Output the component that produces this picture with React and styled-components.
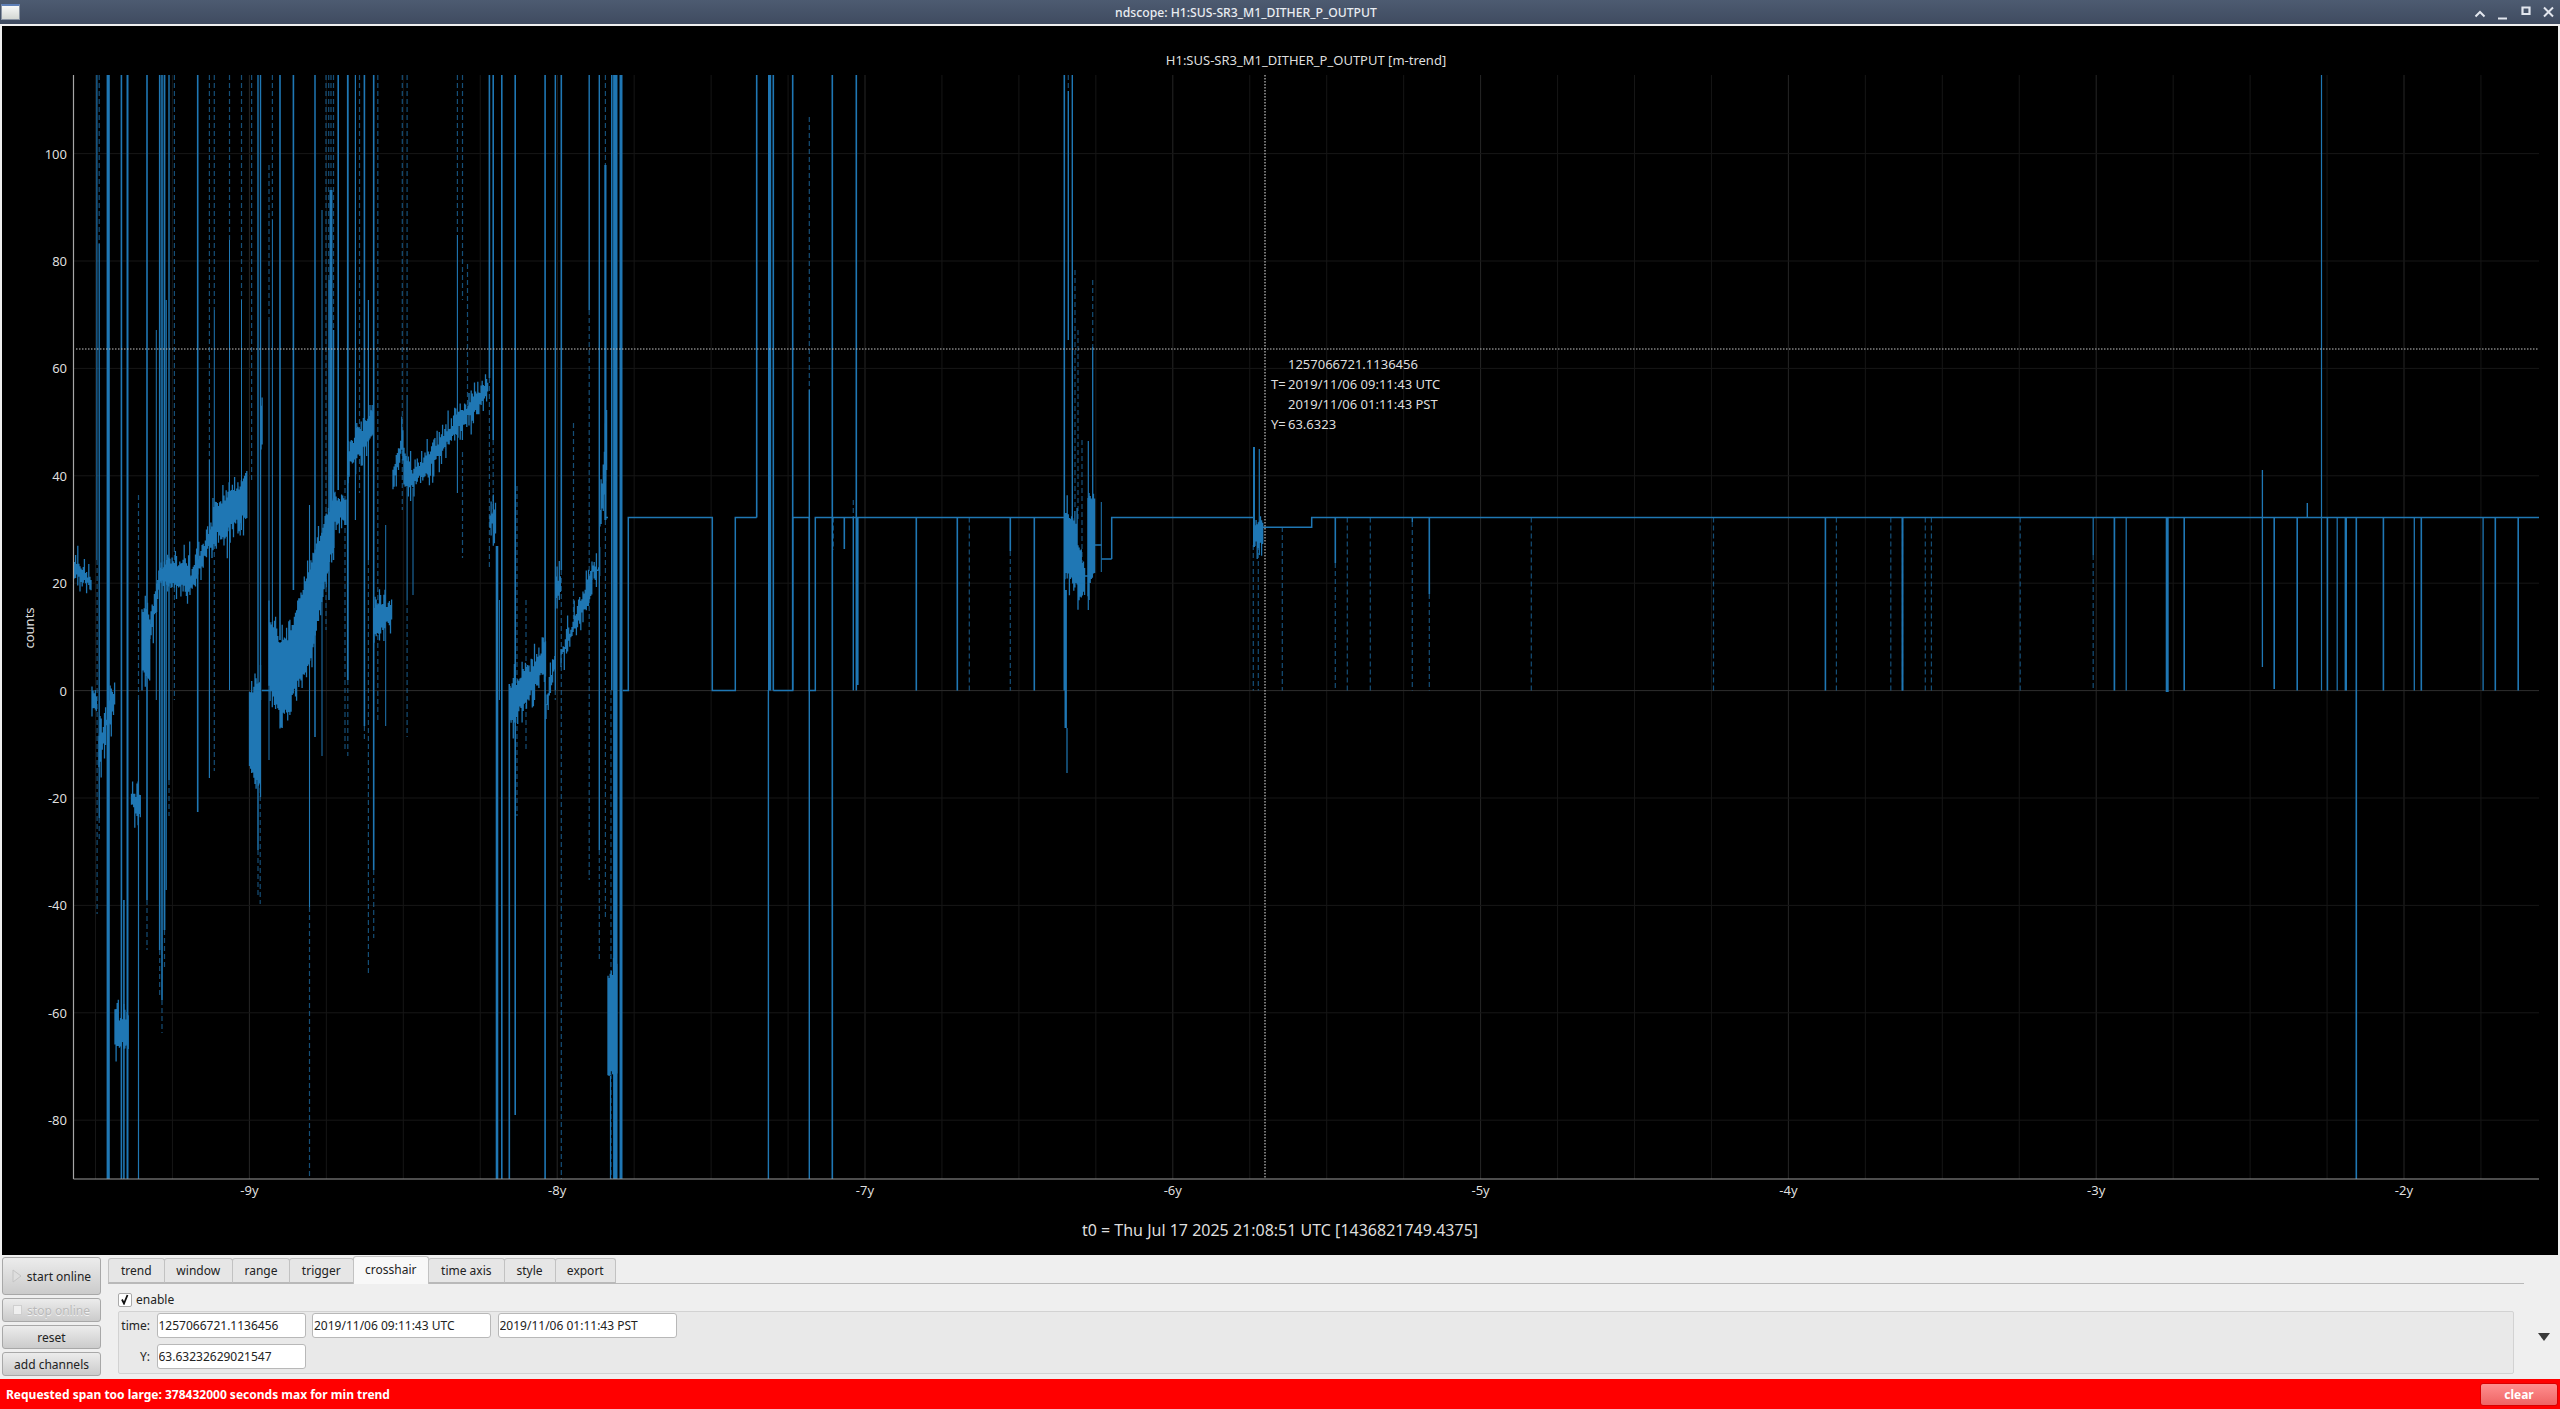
import React from "react";
import styled, { createGlobalStyle } from "styled-components";

const GlobalStyle = createGlobalStyle`
  html, body {
    margin: 0;
    padding: 0;
    height: 100%;
    overflow: hidden;
    background: #efefef;
    font-family: "Noto Sans", sans-serif;
    font-size: 12px;
    color: #222;
  }
  #root { height: 100%; }
`;

const Window = styled.div`
  height: 1409px;
  display: flex;
  flex-direction: column;
`;

const TitleBar = styled.div`
  height: 24px;
  flex: none;
  display: flex;
  align-items: center;
  padding: 0 3px 0 1px;
  background: linear-gradient(#4d5b71, #3f4b60);
  color: #e9edf2;
  font-size: 12.2px;
  font-weight: 500;
`;

const WindowIcon = styled.div`
  width: 19px;
  height: 16px;
  border: 1px solid #8a94a3;
  border-top: 2px solid #5f80b8;
  box-sizing: border-box;
  background: linear-gradient(#f7f8f7, #d4d7d3);
`;

const WindowTitle = styled.div`
  flex: 1;
  text-align: center;
`;

const WindowButtons = styled.div`
  display: flex;
  gap: 7px;
`;

const ScopeWrap = styled.div`
  flex: none;
  height: 1229px;
  margin: 2px 2px 0;
  background: #000;
`;

const Scope = styled.svg`
  display: block;
  width: 2556px;
  height: 1229px;
`;

const PlotText = styled.text`
  font-family: "Noto Sans", sans-serif;
  font-size: ${(p) => p.$size || 13}px;
  fill: #dedede;
`;

const Controls = styled.div`
  flex: 1;
  display: flex;
  gap: 7px;
  padding: 2px 0 0 2px;
  min-height: 0;
`;

const SideButtons = styled.div`
  width: 99px;
  flex: none;
  display: flex;
  flex-direction: column;
  gap: 3px;
`;

const SideButton = styled.button`
  height: ${(p) => (p.$tall ? 38 : 24)}px;
  flex: none;
  display: flex;
  align-items: center;
  justify-content: center;
  gap: 5px;
  padding: 0;
  font-family: inherit;
  font-size: 12px;
  color: ${(p) => (p.disabled ? "#b9b9b9" : "#222")};
  text-shadow: ${(p) => (p.disabled ? "0 1px 0 #f4f4f4" : "none")};
  background: linear-gradient(#ececec, #cbcbcb);
  border: 1px solid #a8a8a8;
  border-radius: 3px;
`;

const TabPane = styled.div`
  width: 2416px;
  flex: none;
  display: flex;
  flex-direction: column;
`;

const TabBar = styled.div`
  height: 27px;
  flex: none;
  display: flex;
  align-items: flex-end;
  border-bottom: 1px solid #b9b9b9;
  box-sizing: border-box;
`;

const Tab = styled.div`
  height: ${(p) => (p.$active ? 28 : 25)}px;
  width: ${(p) => p.$width}px;
  flex: none;
  box-sizing: border-box;
  display: flex;
  align-items: center;
  justify-content: center;
  margin-bottom: ${(p) => (p.$active ? -1 : 0)}px;
  padding-bottom: ${(p) => (p.$active ? 3 : 0)}px;
  background: ${(p) => (p.$active ? "#f8f8f8" : "#e6e6e6")};
  border: 1px solid #c2c2c2;
  border-bottom: ${(p) => (p.$active ? "none" : "1px solid #b9b9b9")};
  border-radius: 3px 3px 0 0;
  margin-right: -1px;
`;

const TabBody = styled.div`
  padding: 9px 10px 0;
  display: flex;
  flex-direction: column;
  gap: 5px;
`;

const EnableRow = styled.label`
  display: flex;
  align-items: center;
  gap: 4px;
  height: 13px;
`;

const CheckBox = styled.span`
  width: 14px;
  height: 14px;
  box-sizing: border-box;
  display: flex;
  align-items: center;
  justify-content: center;
  background: #fff;
  border: 1px solid #aaa;
  border-radius: 2px;
`;

const CrosshairGroup = styled.div`
  height: 63px;
  box-sizing: border-box;
  display: grid;
  grid-template-columns: 31px 149px 179px 179px;
  grid-template-rows: 25px 25px;
  column-gap: 6.5px;
  row-gap: 6px;
  padding: 1px 0 0 0;
  align-items: center;
  background: #e9e9e9;
  border: 1px solid #d2d2d2;
  border-radius: 2px;
`;

const FieldLabel = styled.span`
  text-align: right;
`;

const Field = styled.input`
  height: 25px;
  box-sizing: border-box;
  padding: 0 0 0 1px;
  font-family: inherit;
  font-size: 12px;
  color: #222;
  background: #fff;
  border: 1px solid #b8b8b8;
  border-radius: 3px;
  outline: none;
`;

const Expander = styled.div`
  flex: 1;
  display: flex;
  justify-content: center;
  padding: 76px 3px 0 0;
`;

const Triangle = styled.div`
  width: 0;
  height: 0;
  border-left: 6px solid transparent;
  border-right: 6px solid transparent;
  border-top: 8px solid #3a3a3a;
`;

const StatusBar = styled.div`
  height: 30px;
  flex: none;
  display: flex;
  align-items: center;
  justify-content: space-between;
  padding: 0 2px 0 6px;
  background: #ff0000;
  color: #fff;
  font-weight: 700;
  font-size: 12px;
`;

const ClearButton = styled.button`
  width: 78px;
  height: 23px;
  padding: 0;
  font-family: inherit;
  font-size: 12px;
  font-weight: 700;
  color: #fff;
  background: linear-gradient(#ff8f8f, #ee6464);
  border: 1px solid #d80000;
  border-radius: 3px;
`;

const BLUE = "#1f77b4";
const TOP = 75;
const BOTTOM = 1179;
const ZERO = 690.6;
const HIGH = 517.4;
const LEFT = 73.5;
const RIGHT = 2539;

// [x, y1, y2, width]
const solidSpikes = [
  [96.9, TOP, 560, 1.2], [99.2, 244, 818, 1.3], [108.2, TOP, BOTTOM, 3.2], [121.4, TOP, BOTTOM, 1.6],
  [123.9, 900, BOTTOM, 1.6], [127.5, TOP, BOTTOM, 2], [138.5, 700, BOTTOM, 1.2], [147, TOP, 900, 1.6],
  [156.3, 330, 700, 1], [159.7, TOP, 950, 1.6], [162, TOP, 1000, 1.6], [164.5, TOP, 930, 1.8],
  [166.2, 300, 890, 1.2], [169, TOP, 780, 1.4], [197.7, TOP, 812, 1.6], [209.4, 460, 778, 1.2],
  [214.3, 310, 520, 1], [229.5, 240, 690, 1], [241.5, 300, 530, 1], [258, TOP, 850, 1.4],
  [260.5, TOP, 700, 1.4], [269, 320, 760, 1], [272.4, 220, 690, 1], [280, TOP, 640, 1.6],
  [293.4, TOP, 590, 1.6], [309.5, 505, 907, 1.1], [315, TOP, 737, 1.5], [322, 210, 756, 1],
  [329, 280, 600, 1.5], [331, 190, 540, 3], [333.5, 330, 560, 1.5], [338.2, TOP, 490, 1.6],
  [347.8, TOP, 680, 1.8], [355.4, TOP, 520, 1.2], [364.4, TOP, 726, 1.6], [368.4, 300, 560, 1.2],
  [373.7, TOP, 870, 1.6], [385.7, 525, 726, 1], [407.1, 395, 600, 1], [413, 488, 595, 1],
  [457.4, 235, 493, 1.1], [489.4, TOP, 378, 1.6], [493.2, TOP, 440, 1.6], [497, 546, BOTTOM, 2.6],
  [499.4, 600, 700, 1], [501.8, TOP, BOTTOM, 1.6], [509.3, 684, BOTTOM, 1.6], [515.2, TOP, 1115, 1.6],
  [545.1, TOP, BOTTOM, 1.6], [555.3, TOP, 690, 1.4], [561.3, TOP, 570, 1.6], [589.2, TOP, 310, 1.4],
  [599.3, TOP, 850, 1.4], [605.4, 165, 520, 2.2], [610.5, 1076, BOTTOM, 1.2], [615.3, TOP, BOTTOM, 4.4],
  [621, TOP, BOTTOM, 3], [611.8, TOP, 690, 1.6], [756.7, TOP, HIGH, 1.6], [768.4, 690, BOTTOM, 1.4],
  [769.6, TOP, ZERO, 3.2], [773.3, TOP, ZERO, 1.6], [792.7, TOP, ZERO, 1.6], [809.3, 390, BOTTOM, 1.4],
  [832.3, TOP, BOTTOM, 1.6], [844.3, HIGH, 549, 1.6], [853.3, HIGH, ZERO, 1.4], [856.3, TOP, ZERO, 1.6],
  [857.8, HIGH, 685, 1.6], [916.3, HIGH, ZERO, 1.6], [957.3, HIGH, ZERO, 1.6], [1010.3, HIGH, 551, 1.6],
  [1034.3, HIGH, ZERO, 1.6], [1064.3, TOP, ZERO, 1.6], [1068.3, 91, 340, 1.4], [1072.3, TOP, 520, 1.4],
  [1065.7, 590, 728, 2.4], [1067, 728, 773, 1.2], [1088.3, 441, 610, 1.2], [1092.7, 347, 500, 1.3],
  [1101.3, 502, 572, 1], [1254, 447, 547, 2], [1259.3, 449, 555, 1.2], [1335.3, HIGH, 563, 1.6],
  [1412.3, HIGH, 522, 1.4], [1429.3, HIGH, 594, 1.6], [1825.4, HIGH, ZERO, 1.6], [1902.5, HIGH, ZERO, 2],
  [2093.2, HIGH, 555, 1.2], [2114.4, HIGH, ZERO, 1.7], [2126.2, HIGH, ZERO, 1.2], [2167.2, HIGH, 692, 3],
  [2184.2, HIGH, ZERO, 1.6], [2262.4, 470, 667, 1.3], [2274.2, HIGH, 689, 1.6], [2297.2, HIGH, ZERO, 1.6],
  [2307.3, 503, HIGH, 1.4], [2321.5, TOP, ZERO, 1.2], [2327.4, HIGH, ZERO, 1.6], [2337.2, HIGH, ZERO, 1.2],
  [2345.8, HIGH, ZERO, 2.4], [2356.3, HIGH, BOTTOM, 1.6], [2383.4, HIGH, ZERO, 1.6], [2414.3, HIGH, ZERO, 1.3],
  [2421.3, HIGH, ZERO, 1.6], [2483.1, HIGH, ZERO, 1.3], [2495.3, HIGH, ZERO, 1.6], [2518.2, HIGH, ZERO, 1.6],
];

const dashedSpikes = [
  [97.1, 560, 914], [99.2, TOP, 244], [99.2, 818, 840], [108.2, 1000, 1080], [138.5, 495, 700], [147, 900, 950],
  [159.7, 950, 995], [162, 1000, 1033], [164.5, 930, 970], [169, 780, 816], [174.4, TOP, 700],
  [209.4, TOP, 460], [214.3, TOP, 310], [214.3, 520, 771], [229.5, TOP, 240], [241.5, TOP, 300],
  [251.6, TOP, 480], [258, 850, 897], [260.2, 700, 904], [269, 165, 320],
  [272.4, TOP, 220], [309.5, 907, BOTTOM], [326, TOP, 630], [328.7, TOP, 280], [331, TOP, 190],
  [333.5, TOP, 330], [345, 480, 750], [347.8, 680, 756], [359.5, TOP, 493],
  [364.4, 726, 740], [368.4, 560, 976], [373.7, 870, 938], [377.8, TOP, 720], [402.3, TOP, 510],
  [407.1, TOP, 395], [407.1, 600, 737], [457.4, TOP, 235], [462.5, 452, 558], [462.5, TOP, 300],
  [467.5, 264, 411], [489.4, 378, 570], [493.2, 440, 520], [517, 486, 816], [526, 600, 750],
  [555.3, 690, 700], [561.3, 570, BOTTOM], [573.5, 423, 619], [589.2, 310, 880], [599.3, 850, 962],
  [605.4, TOP, 165], [605.4, 520, 920], [611, 690, BOTTOM], [809.3, 117, 390], [833.3, HIGH, 550],
  [853.3, 500, 520], [969.3, HIGH, ZERO], [1010.3, 551, ZERO], [1068.3, TOP, 91], [1075, 270, 510],
  [1078, 330, 520], [1082, 440, 570], [1092.7, 280, 347], [1253.3, 545, ZERO], [1258.3, 545, ZERO],
  [1282.3, 527, ZERO], [1335.3, 563, ZERO], [1347.3, HIGH, ZERO], [1370.3, HIGH, ZERO],
  [1412.3, 522, ZERO], [1429.3, 594, ZERO], [1531.3, HIGH, ZERO], [1713.5, HIGH, ZERO],
  [1836.4, HIGH, ZERO], [1890.8, HIGH, ZERO], [1902.5, HIGH, ZERO], [1925.3, HIGH, ZERO],
  [1931.4, HIGH, ZERO], [2020.2, HIGH, ZERO], [2093.2, 555, ZERO],
];

// noisy min/max band: [x0, x1, top0, top1, bottom0, bottom1]
const bands = [
  [74.5, 91, 560, 575, 578, 590], [92, 97, 686, 700, 705, 718], [99, 107, 735, 718, 770, 728],
  [108, 115, 700, 690, 730, 705], [115, 129, 1018, 1018, 1045, 1050], [131.5, 141, 790, 795, 808, 818],
  [142, 150, 607, 615, 672, 680], [150, 160, 620, 566, 640, 585], [160, 190, 565, 560, 585, 590],
  [190, 213, 575, 520, 595, 540], [213, 228, 503, 498, 535, 541], [228, 238, 490, 488, 530, 521],
  [238, 247.5, 486, 468, 521, 517], [249.5, 261, 690, 680, 770, 790], [261, 263, 405, 405, 448, 448],
  [269, 280, 615, 640, 690, 715], [280, 290, 640, 635, 715, 715], [290, 313, 631, 554, 700, 660],
  [313, 335, 554, 492, 650, 535], [335, 347, 498, 495, 525, 520], [348, 374, 448, 407, 470, 435],
  [374, 392, 605, 600, 640, 620], [393, 404, 470, 425, 490, 445], [404, 414, 450, 472, 490, 488],
  [414, 488, 468, 378, 487, 396], [490, 496, 510, 505, 530, 528], [510, 529, 684, 670, 725, 700],
  [529, 546, 670, 640, 700, 670], [546, 555, 700, 655, 715, 670], [556, 561, 576, 575, 598, 595],
  [561, 592, 652, 567, 660, 598], [592, 600, 565, 565, 575, 575], [600, 607, 510, 411, 530, 470],
  [608, 617, 973, 973, 1076, 1076], [1065, 1078, 510, 520, 570, 590], [1078, 1085, 540, 570, 597, 597],
  [1088, 1095, 500, 495, 590, 575], [1255, 1263, 520, 520, 547, 545],
];

const levelPath = [
  "M262 690.6H270",
  `M605 ${HIGH}H608`,
  `M623 690.6H628.3V${HIGH}H712.3V690.6H735.3V${HIGH}H756.7`,
  `M773.3 690.6H792.7V${HIGH}H809.3V690.6H815.3V${HIGH}H1064.3`,
  "M1078 576H1088M1095 545H1101.5M1101.5 559H1111.7",
  `M1111.7 559V${HIGH}H1253`,
  `M1263 527.3H1311.7V${HIGH}H${RIGHT}`,
].join("");

const makeBandPath = () => {
  let seed = 71;
  const rnd = () => {
    seed = (seed * 16807) % 2147483647;
    return seed / 2147483647;
  };
  let d = "";
  bands.forEach(([x0, x1, t0, t1, b0, b1]) => {
    for (let x = x0; x < x1; x += 1.1) {
      const f = (x - x0) / (x1 - x0);
      const top = t0 + (t1 - t0) * f - Math.pow(rnd(), 4) * 20 + rnd() * 6;
      const bot = b0 + (b1 - b0) * f + Math.pow(rnd(), 4) * 22 - rnd() * 6;
      d += `M${x.toFixed(1)} ${top.toFixed(1)}V${bot.toFixed(1)}`;
    }
  });
  return d;
};

const bandPath = makeBandPath();

const xMajor = [-9, -8, -7, -6, -5, -4, -3, -2];
const yMajor = [100, 80, 60, 40, 20, 0, -20, -40, -60, -80];
const xAt = (yr) => 249.4 + 307.8 * (yr + 9);
const yAt = (v) => ZERO - 5.37 * v;

const gridLines = [];
for (let k = -2; k < 30; k++) gridLines.push(k);

const PlotArea = () => (
  <Scope viewBox="2 26 2556 1229">
    {gridLines.map((k) => (
      <line
        key={k}
        x1={249.4 + 76.95 * k}
        x2={249.4 + 76.95 * k}
        y1={TOP}
        y2={BOTTOM}
        stroke={k % 4 === 0 ? "#262626" : "#161616"}
        strokeWidth="1"
      />
    ))}
    {yMajor.map((v) => (
      <line key={v} x1={LEFT} x2={RIGHT} y1={yAt(v)} y2={yAt(v)} stroke={v === 0 ? "#2e2e2e" : "#171717"} strokeWidth="1" />
    ))}

    {dashedSpikes.map(([x, y1, y2], i) => (
      <line key={i} x1={x} x2={x} y1={y1} y2={y2} stroke={BLUE} strokeOpacity="0.66" strokeWidth="1.2" strokeDasharray="5 3" />
    ))}
    {solidSpikes.map(([x, y1, y2, w], i) => (
      <line key={i} x1={x} x2={x} y1={y1} y2={y2} stroke={BLUE} strokeWidth={w} />
    ))}
    <path d={bandPath} stroke={BLUE} strokeWidth="1.3" fill="none" />
    <path d={levelPath} stroke={BLUE} strokeWidth="1.5" fill="none" />

    <line x1={LEFT} x2={LEFT} y1={TOP} y2={BOTTOM} stroke="#a6a6a6" strokeWidth="1.2" />
    <line x1={LEFT} x2={RIGHT} y1={BOTTOM} y2={BOTTOM} stroke="#999" strokeWidth="1.2" />

    <line x1={76} x2={RIGHT} y1="349" y2="349" stroke="#c4c4c4" strokeWidth="1.2" strokeDasharray="1.5 1.5" />
    <line x1="1265" x2="1265" y1={TOP} y2={BOTTOM} stroke="#c4c4c4" strokeWidth="1.2" strokeDasharray="1.5 1.5" />

    <PlotText x="1306" y="65" textAnchor="middle">H1:SUS-SR3_M1_DITHER_P_OUTPUT [m-trend]</PlotText>
    {yMajor.map((v) => (
      <PlotText key={v} x="67" y={yAt(v) + 5} textAnchor="end">{v}</PlotText>
    ))}
    {xMajor.map((yr) => (
      <PlotText key={yr} x={xAt(yr)} y="1195" textAnchor="middle">{yr}y</PlotText>
    ))}
    <PlotText x="0" y="0" textAnchor="middle" transform="translate(34 628) rotate(-90)">counts</PlotText>
    <PlotText x="1280" y="1236" textAnchor="middle" $size="16">t0 = Thu Jul 17 2025 21:08:51 UTC [1436821749.4375]</PlotText>

    <PlotText x="1288" y="369">1257066721.1136456</PlotText>
    <PlotText x="1271" y="389">T=</PlotText>
    <PlotText x="1288" y="389">2019/11/06 09:11:43 UTC</PlotText>
    <PlotText x="1288" y="409">2019/11/06 01:11:43 PST</PlotText>
    <PlotText x="1271" y="429">Y=</PlotText>
    <PlotText x="1288" y="429">63.6323</PlotText>
  </Scope>
);

const WinGlyph = ({ d, strokeWidth = 2 }) => (
  <svg width="16" height="16" viewBox="0 0 16 16">
    <path d={d} stroke="#e2e6ee" strokeWidth={strokeWidth} fill="none" />
  </svg>
);

const tabs = [
  ["trend", 56.5],
  ["window", 69.5],
  ["range", 58],
  ["trigger", 64.6],
  ["crosshair", 76.4],
  ["time axis", 76.6],
  ["style", 52],
  ["export", 61.4],
];

export default function App() {
  return (
    <Window>
      <GlobalStyle />
      <TitleBar>
        <WindowIcon />
        <WindowTitle>ndscope: H1:SUS-SR3_M1_DITHER_P_OUTPUT</WindowTitle>
        <WindowButtons>
          <WinGlyph d="M3.5 12.5L8 8l4.5 4.5" />
          <WinGlyph d="M3 14.5h9" />
          <WinGlyph d="M4.5 3.5h7v6.5h-7z" strokeWidth="2.2" />
          <WinGlyph d="M3 3.5l9 9M12 3.5l-9 9" />
        </WindowButtons>
      </TitleBar>

      <ScopeWrap>
        <PlotArea />
      </ScopeWrap>

      <Controls>
        <SideButtons>
          <SideButton $tall>
            <svg width="10" height="14" viewBox="0 0 10 14">
              <path d="M1 1l8 6-8 6z" fill="#dedede" stroke="#c4c4c4" />
            </svg>
            start online
          </SideButton>
          <SideButton disabled>
            <svg width="9" height="10" viewBox="0 0 9 10">
              <rect x="0.5" y="0.5" width="8" height="9" fill="#efefef" stroke="#cfcfcf" />
            </svg>
            stop online
          </SideButton>
          <SideButton>reset</SideButton>
          <SideButton>add channels</SideButton>
        </SideButtons>

        <TabPane>
          <TabBar>
            {tabs.map(([label, width]) => (
              <Tab key={label} $width={width} $active={label === "crosshair"}>{label}</Tab>
            ))}
          </TabBar>
          <TabBody>
            <EnableRow>
              <CheckBox>
                <svg width="10" height="11" viewBox="0 0 10 11">
                  <path d="M2 5.5L4 9.5L7.5 1" stroke="#111" strokeWidth="1.8" fill="none" />
                </svg>
              </CheckBox>
              enable
            </EnableRow>
            <CrosshairGroup>
              <FieldLabel>time:</FieldLabel>
              <Field readOnly value="1257066721.1136456" />
              <Field readOnly value="2019/11/06 09:11:43 UTC" />
              <Field readOnly value="2019/11/06 01:11:43 PST" />
              <FieldLabel>Y:</FieldLabel>
              <Field readOnly value="63.63232629021547" />
            </CrosshairGroup>
          </TabBody>
        </TabPane>

        <Expander>
          <Triangle />
        </Expander>
      </Controls>

      <StatusBar>
        Requested span too large: 378432000 seconds max for min trend
        <ClearButton>clear</ClearButton>
      </StatusBar>
    </Window>
  );
}
